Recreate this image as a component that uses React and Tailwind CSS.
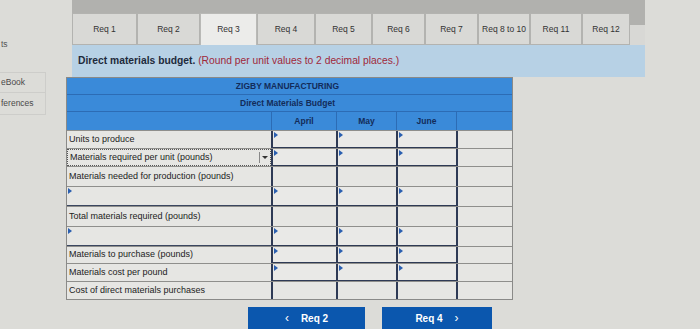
import React from "react";

const tabs = [
  ["Req 1", 65],
  ["Req 2", 63],
  ["Req 3", 57],
  ["Req 4", 58],
  ["Req 5", 57],
  ["Req 6", 53],
  ["Req 7", 53],
  ["Req 8 to 10", 52],
  ["Req 11", 52],
  ["Req 12", 48],
];

const rows = [
  { label: "Units to produce", h: 18, inputs: true },
  { label: "Materials required per unit (pounds)", h: 18, inputs: true, select: true },
  { label: "Materials needed for production (pounds)", h: 20, inputs: false },
  { label: "", h: 20, inputs: true, blank: true },
  { label: "Total materials required (pounds)", h: 20, inputs: false },
  { label: "", h: 20, inputs: true, blank: true },
  { label: "Materials to purchase (pounds)", h: 17, inputs: true },
  { label: "Materials cost per pound", h: 18, inputs: true },
  { label: "Cost of direct materials purchases", h: 18, inputs: false },
];

function Marker() {
  return (
    <span className="absolute left-[1px] top-[1px] w-0 h-0 border-t-[3px] border-b-[3px] border-l-[4px] border-t-transparent border-b-transparent border-l-[#2a5fb0]" />
  );
}

export default function App() {
  return (
    <div className="w-[700px] h-[329px] overflow-hidden bg-[#dcdcd8] flex font-['Liberation_Sans',Arial,sans-serif]">
      <aside className="w-[66px] shrink-0 text-[8.5px] text-[#555]">
        <div className="h-[38px]" />
        <div className="h-[14px] pl-[1px]">ts</div>
        <div className="h-[20px]" />
        <div className="w-[46px] border-r border-t border-[#cdcdca]">
          <div className="h-[20px] flex items-center pl-[1px] border-b border-[#cdcdca] text-[#4a4a4a]">eBook</div>
          <div className="h-[22px] flex items-center pl-[1px] border-b border-[#cdcdca] text-[#4a4a4a]">ferences</div>
        </div>
      </aside>
      <main className="w-[600px] flex flex-col">
        <div className="ml-[6px] w-[573px] pt-[13px] bg-[linear-gradient(#b1b1ae_25px,#d8d8d5_25px)]">
          <div className="flex h-[32px]">
            {tabs.map(([t, w], i) => (
              <div
                key={t}
                style={{ width: w }}
                className={
                  i === 2
                    ? "h-[32px] flex items-center justify-center text-[8.5px] text-[#333] bg-[#ececea] border-l border-r border-t border-[#b9b9b6]"
                    : "h-[32px] flex items-center justify-center text-[8.5px] text-[#333] bg-[#d9d9d6] border border-[#b3b3b0]"
                }
              >
                {t}
              </div>
            ))}
          </div>
        </div>
        <div className="ml-[6px] w-[573px] h-[35px] bg-[#b7d1e5] flex items-center pl-[6px] text-[10.3px]">
          <span className="text-[#1e2a3c] font-bold">Direct materials budget.&nbsp;</span>
          <span className="text-[#a0283a]">(Round per unit values to 2 decimal places.)</span>
        </div>
        <div className="w-[447px] bg-[#e6e6e3] border border-[#8a8a88]">
          <div className="h-[17px] bg-[#3a8ad9] border-b border-[#2c6cb5] flex items-center justify-center text-[8.5px] font-bold text-[#132c5a] pr-[4px]">
            ZIGBY MANUFACTURING
          </div>
          <div className="h-[17px] bg-[#3a8ad9] border-b border-[#2c6cb5] flex items-center justify-center text-[8.5px] font-bold text-[#132c5a] pr-[4px]">
            Direct Materials Budget
          </div>
          <div className="h-[18px] bg-[#3a8ad9] flex text-[8.5px] font-bold text-[#132c5a]">
            <div className="w-[204px]" />
            <div className="w-[65px] border-l border-[#2c6cb5] flex items-center justify-center">April</div>
            <div className="w-[60px] border-l border-[#2c6cb5] flex items-center justify-center">May</div>
            <div className="w-[60px] border-l border-[#2c6cb5] flex items-center justify-center">June</div>
            <div className="flex-1 border-l border-[#2c6cb5]" />
          </div>
          {rows.map((r, i) => (
            <div key={i} style={{ height: r.h }} className="flex border-t border-[#8f8f8c]">
              <div
                className={
                  r.select
                    ? "w-[204px] relative flex items-center text-[9px] text-[#222] border border-dotted border-[#555] pl-[2px]"
                    : r.blank
                    ? "w-[204px] relative flex items-center text-[9px] text-[#222] border-b border-[#3a4660] pl-[2px]"
                    : "w-[204px] relative flex items-center text-[9px] text-[#222] pl-[2px]"
                }
              >
                {r.blank && <Marker />}
                {r.label}
                {r.select && (
                  <span className="absolute right-0 top-[2px] bottom-[2px] w-[11px] border-l border-[#888] flex items-center justify-center">
                    <span className="w-0 h-0 border-l-[3px] border-r-[3px] border-t-[3px] border-l-transparent border-r-transparent border-t-[#333]" />
                  </span>
                )}
              </div>
              {[65, 60, 60].map((w, j) => (
                <div
                  key={j}
                  style={{ width: w }}
                  className={
                    r.inputs
                      ? "relative border-l-2 border-b border-[#2e3a55] bg-[#e9e9e7]"
                      : "relative border-l-2 border-[#2e3a55]"
                  }
                >
                  {r.inputs && <Marker />}
                </div>
              ))}
              <div className="flex-1 border-l-2 border-[#2e3a55]" />
            </div>
          ))}
        </div>
        <div className="flex gap-[17px] ml-[182px] mt-[7px]">
          <div className="w-[117px] h-[22px] bg-[#0b57ae] flex items-center justify-center gap-[12px] text-white text-[10px] font-bold">
            <span className="font-normal text-[12px]">&lsaquo;</span>
            <span>Req 2</span>
          </div>
          <div className="w-[110px] h-[22px] bg-[#0b57ae] flex items-center justify-center gap-[12px] text-white text-[10px] font-bold">
            <span>Req 4</span>
            <span className="font-normal text-[12px]">&rsaquo;</span>
          </div>
        </div>
      </main>
    </div>
  );
}
